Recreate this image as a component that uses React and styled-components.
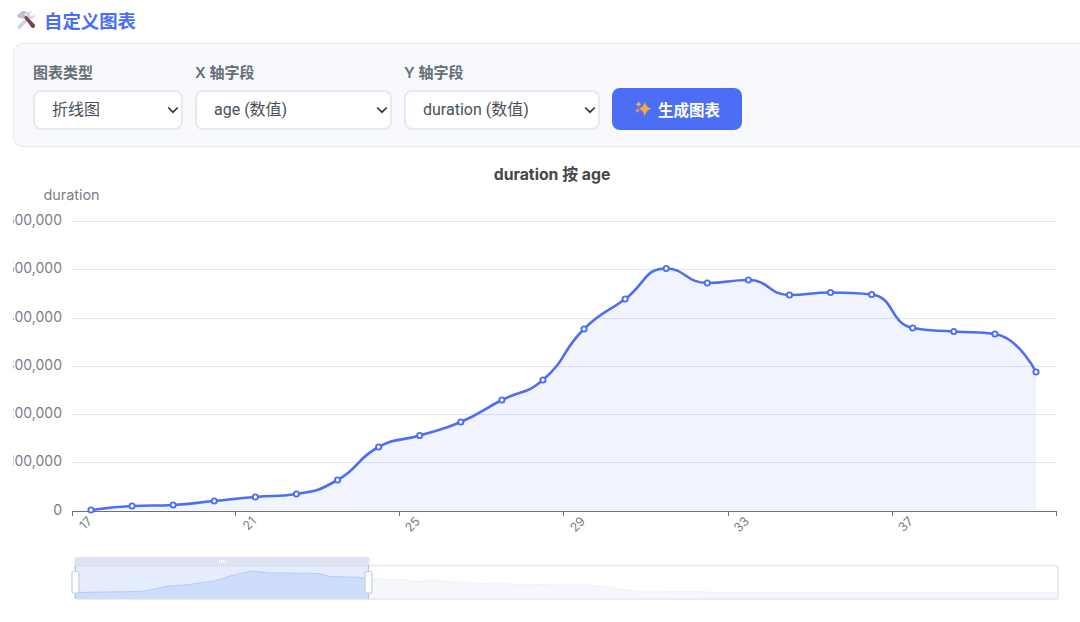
import React from "react";
import styled, { createGlobalStyle } from "styled-components";

const GlobalStyle = createGlobalStyle`
  html, body {
    margin: 0;
    padding: 0;
    background: #fff;
    overflow: hidden;
  }
  body {
    font-family: "Inter", "Noto Sans CJK SC", sans-serif;
  }
`;

const Page = styled.div`
  width: 1080px;
  height: 622px;
  overflow: hidden;
  background: #fff;
`;

const Heading = styled.h3`
  display: flex;
  align-items: center;
  gap: 8px;
  height: 43px;
  margin: 0;
  padding: 0 0 4px 16px;
  box-sizing: border-box;
  font-size: 18.4px;
  font-weight: 700;
  color: #4c6ef5;
`;

const Controls = styled.div`
  display: flex;
  align-items: flex-end;
  gap: 12px;
  width: 1100px;
  height: 104px;
  margin-left: 13px;
  padding: 0 19px 16px;
  box-sizing: border-box;
  background: #f8f9fc;
  border: 1px solid #e6e9f2;
  border-radius: 10px;
`;

const Field = styled.label`
  display: flex;
  flex-direction: column;
  gap: 8px;
  font-size: 15px;
  font-weight: 600;
  color: #666f76;
`;

const chevron =
  "data:image/svg+xml,%3Csvg xmlns='http://www.w3.org/2000/svg' width='12' height='8' viewBox='0 0 12 8'%3E%3Cpath d='M1.2 1.5 6 6.2l4.8-4.7' fill='none' stroke='%23343a40' stroke-width='1.7'/%3E%3C/svg%3E";

const Select = styled.select`
  appearance: none;
  width: ${(props) => props.$width}px;
  height: 40px;
  padding: 0 24px 2px 17px;
  box-sizing: border-box;
  background: #fff url("${chevron}") no-repeat right 2px center;
  border: 2px solid #e6e9f2;
  border-radius: 8px;
  font-family: "Roboto", "Noto Sans CJK SC", sans-serif;
  font-size: 16px;
  color: #495057;
`;

const GenerateButton = styled.button`
  display: flex;
  align-items: center;
  justify-content: center;
  gap: 6px;
  width: 130px;
  height: 42px;
  padding: 0;
  background: #4c6ef5;
  border: none;
  border-radius: 8px;
  font-family: inherit;
  font-size: 15.5px;
  font-weight: 700;
  color: #fff;
`;

const ChartSvg = styled.svg`
  display: block;
  width: 1067px;
  height: 475px;
  margin-left: 13px;
`;

const X_START = 91;
const X_STEP = 41.087;
const Y_ZERO = 510.5;
const Y_UNIT = 48.25;

const pointsY = [
  510, 506, 505, 501, 497, 494, 480, 447, 435.5, 422, 400, 380, 329, 299, 268.5,
  283, 280, 295, 292.5, 294.5, 328, 331.5, 334, 372,
];

const points = pointsY.map((y, i) => [X_START + i * X_STEP, y]);

const clamp = (v, a, b) => Math.min(Math.max(v, Math.min(a, b)), Math.max(a, b));

// same constrained smoothing a line chart library uses: control points stay inside the segment range
const smoothPath = (pts, smooth = 0.5) => {
  const controls = pts.map((p, i) => {
    const prev = pts[i - 1] || p;
    const next = pts[i + 1] || p;
    const lenPrev = Math.hypot(p[0] - prev[0], p[1] - prev[1]);
    const lenNext = Math.hypot(next[0] - p[0], next[1] - p[1]);
    if (!lenPrev || !lenNext) return { before: p, after: p };
    const ratio = lenNext / (lenNext + lenPrev);
    const after = [0, 1].map((k) =>
      clamp(p[k] + (next[k] - prev[k]) * ratio * smooth, p[k], next[k])
    );
    const before = [0, 1].map((k) =>
      clamp(p[k] - ((after[k] - p[k]) * lenPrev) / lenNext, prev[k], p[k])
    );
    const fixed = [0, 1].map((k) => p[k] + ((p[k] - before[k]) * lenNext) / lenPrev);
    return { before, after: fixed };
  });
  let d = `M${pts[0][0]} ${pts[0][1]}`;
  for (let i = 1; i < pts.length; i++) {
    const a = controls[i - 1].after;
    const b = controls[i].before;
    d += ` C${a[0]} ${a[1]} ${b[0]} ${b[1]} ${pts[i][0]} ${pts[i][1]}`;
  }
  return d;
};

const linePath = smoothPath(points);
const areaPath = `${linePath} L${points[points.length - 1][0]} ${Y_ZERO} L${X_START} ${Y_ZERO} Z`;

const yTicks = [0, 100000, 200000, 300000, 400000, 500000, 600000];
const xTickPositions = [72, 235, 399, 563, 728, 892, 1056];
const xLabels = [
  { text: "17", x: 93 },
  { text: "21", x: 257 },
  { text: "25", x: 421 },
  { text: "29", x: 586 },
  { text: "33", x: 750 },
  { text: "37", x: 914 },
];

const shadowLeft = [
  [75, 592.5], [140, 591.5], [150, 590], [165, 586.5], [185, 585], [215, 581],
  [230, 576], [252, 571], [270, 573], [290, 573], [318, 573.5], [330, 576.5],
  [345, 577], [358, 577], [369, 579.5],
];

const shadowRight = [
  [369, 579.5], [381, 578.7], [392, 580], [408, 580], [420, 581.7], [431, 579.7],
  [454, 582.3], [471, 582.3], [484, 584], [496, 582.7], [510, 584.3], [535, 584.3],
  [554, 585], [586, 585], [611, 587], [639, 592], [701, 591.7], [710, 592.3], [1058, 592.7],
];

const toPoly = (pts) => {
  const line = pts.map((p) => p.join(",")).join(" ");
  return `${pts[0][0]},598 ${line} ${pts[pts.length - 1][0]},598`;
};

const HammerIcon = () => (
  <svg width="20" height="20" viewBox="0 0 20 20" aria-hidden="true">
    {/* wrench */}
    <path
      d="M1.6 16.2 L10.6 7 Q9.9 3.4 12.6 1.8 Q14.4 0.9 16 1.4 L13.6 3.8 L14.2 6 L16.4 6.6 L18.8 4.2 Q19.2 6.4 17.6 8 Q15.8 9.6 13.2 9.4 L4.4 18.8 Q2.8 19.4 1.8 18.4 Q1.2 17.4 1.6 16.2 Z"
      fill="#d8d0e2"
    />
    {/* hammer head */}
    <path
      d="M0.8 5.6 L6.4 1 Q9 0.6 11 2 L12 3.4 Q9.4 2.8 8.6 4.4 L9.8 6 L6.6 9.2 L5.2 7.8 L3.4 8.4 Z"
      fill="#c5bcd2"
    />
    {/* hammer handle */}
    <path
      d="M8 7.4 L10 5.6 L19 14.8 Q19.6 16.4 18.4 17.6 Q17 18.6 15.6 17.6 Z"
      fill="#7f3f4c"
    />
  </svg>
);

const SparkleIcon = () => (
  <svg width="18" height="18" viewBox="0 0 18 18" aria-hidden="true">
    <path d="M10.8 1.4 Q11.7 7 17.4 8.8 Q11.7 10.4 10.8 16.6 Q9.9 10.4 4.4 8.8 Q9.9 7 10.8 1.4 Z" fill="#f9a83c" />
    <path d="M4.6 1.2 Q5.1 3.5 7.4 4.2 Q5.1 4.9 4.6 7.2 Q4.1 4.9 1.8 4.2 Q4.1 3.5 4.6 1.2 Z" fill="#fbb549" />
    <path d="M3.4 8 Q3.8 10 5.8 10.6 Q3.8 11.2 3.4 13.2 Q3 11.2 1 10.6 Q3 10 3.4 8 Z" fill="#f59f45" />
  </svg>
);

const AxisLabel = styled.text`
  font-family: "Inter", "Noto Sans CJK SC", sans-serif;
  font-size: ${(props) => props.$size || 14}px;
  fill: #7b7d86;
`;

const ChartTitle = styled.text`
  font-family: "Inter", "Noto Sans CJK SC", sans-serif;
  font-size: 15.8px;
  font-weight: 700;
  fill: #464646;
`;

const Chart = () => (
  <ChartSvg viewBox="13 147 1067 475">
    <ChartTitle x="552" y="180" textAnchor="middle">duration 按 age</ChartTitle>
    <AxisLabel x="71.5" y="200" textAnchor="middle" $size={14.4}>duration</AxisLabel>

    {yTicks.map((tick) => {
      const y = Math.round(Y_ZERO - (tick / 100000) * Y_UNIT) + 0.5;
      return (
        <g key={tick}>
          {tick > 0 && <line x1="72" x2="1056" y1={y} y2={y} stroke="#e0e6f1" />}
          <AxisLabel x="62" y={y + 3.5} textAnchor="end">
            {tick.toLocaleString("en-US")}
          </AxisLabel>
        </g>
      );
    })}

    <path d={areaPath} fill="#4c6ef5" fillOpacity="0.08" />
    <line x1="72" x2="1056" y1="511.5" y2="511.5" stroke="#6e7079" />
    {xTickPositions.map((x) => (
      <line key={x} x1={x + 0.5} x2={x + 0.5} y1="511" y2="516" stroke="#6e7079" />
    ))}
    {xLabels.map((label) => (
      <AxisLabel
        key={label.text}
        $size={12.5}
        x={label.x}
        y="522"
        textAnchor="end"
        transform={`rotate(-45 ${label.x} 522)`}
      >
        {label.text}
      </AxisLabel>
    ))}

    <path d={linePath} fill="none" stroke="#4c6ef5" strokeWidth="2.6" />
    {points.map(([x, y]) => (
      <circle key={x} cx={x} cy={y} r="2.6" fill="#fff" stroke="#4c6ef5" strokeWidth="1.9" />
    ))}

    {/* data zoom */}
    <rect x="74.5" y="565.5" width="983.5" height="33.5" rx="3" fill="#fff" stroke="#dfe6f5" strokeWidth="1.5" />
    <polygon points={toPoly(shadowRight)} fill="#eef0f9" fillOpacity="0.55" stroke="none" />
    <polyline points={shadowRight.map((p) => p.join(",")).join(" ")} fill="none" stroke="#eef1fa" />
    <rect x="75" y="565" width="294" height="34" fill="#87aff4" fillOpacity="0.22" />
    <polygon points={toPoly(shadowLeft)} fill="#9dbcf7" fillOpacity="0.32" />
    <polyline points={shadowLeft.map((p) => p.join(",")).join(" ")} fill="none" stroke="#b3cafa" />
    <rect x="74.5" y="557" width="295" height="8.5" rx="1.5" fill="#dfe4f2" />
    <path d="M219.5 560v3M221.5 560v3M223.5 560v3M225.5 560v3" stroke="#fff" strokeWidth="1" />
    <line x1="75.5" x2="75.5" y1="565" y2="599" stroke="#b9c5dc" />
    <line x1="368.5" x2="368.5" y1="565" y2="599" stroke="#b9c5dc" />
    <rect x="72" y="571.5" width="7" height="21.5" rx="2" fill="#fff" stroke="#c5cfe2" strokeWidth="1.2" />
    <rect x="365" y="571.5" width="7" height="21.5" rx="2" fill="#fff" stroke="#c5cfe2" strokeWidth="1.2" />
  </ChartSvg>
);

export default function App() {
  return (
    <Page>
      <GlobalStyle />
      <Heading>
        <HammerIcon />
        自定义图表
      </Heading>
      <Controls>
        <Field>
          图表类型
          <Select $width={150} defaultValue="line">
            <option value="line">折线图</option>
            <option value="bar">柱状图</option>
          </Select>
        </Field>
        <Field>
          X 轴字段
          <Select $width={197} defaultValue="age">
            <option value="age">age (数值)</option>
          </Select>
        </Field>
        <Field>
          Y 轴字段
          <Select $width={196} defaultValue="duration">
            <option value="duration">duration (数值)</option>
          </Select>
        </Field>
        <GenerateButton>
          <SparkleIcon />
          生成图表
        </GenerateButton>
      </Controls>
      <Chart />
    </Page>
  );
}
